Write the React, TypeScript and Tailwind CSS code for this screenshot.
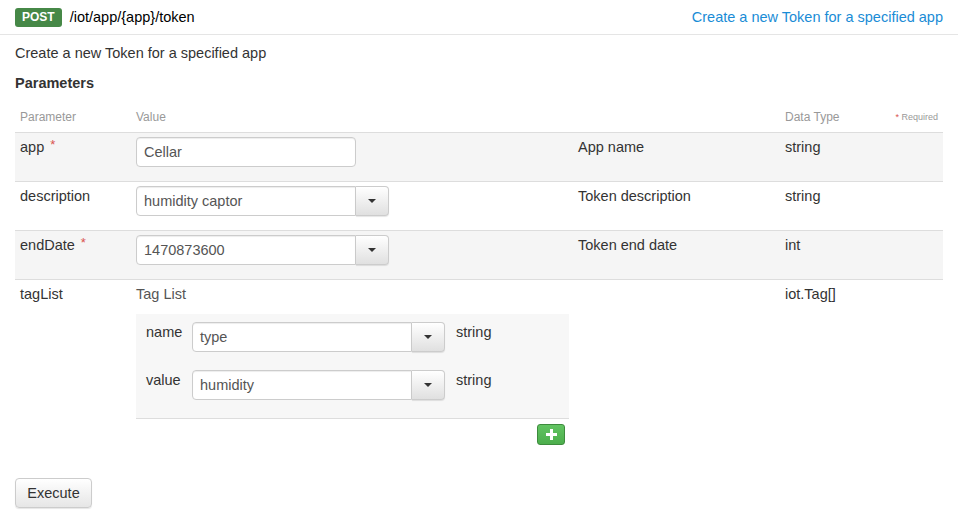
import React from "react";

const Caret = () => <span className="inline-block w-0 h-0 border-x-[4px] border-x-transparent border-t-[4px] border-t-[#333]" />;

const ComboInput = ({ value, width }: { value: string; width: string }) => (
    <div className={`flex h-[30px] ${width}`}>
        <div className="flex-1 flex items-center pl-[7px] border border-[#ccc] rounded-l-[4px] bg-white shadow-[inset_0_1px_1px_rgba(0,0,0,0.075)] text-[#555]">
            {value}
        </div>
        <button className="w-[33px] flex items-center justify-center border border-l-0 border-[#ccc] rounded-r-[4px] bg-gradient-to-b from-white to-[#e0e0e0] shadow-[0_1px_1px_rgba(0,0,0,0.1)]">
            <Caret />
        </button>
    </div>
);

const Star = () => <span className="text-[#d9534f] ml-[6px] text-[13px] relative top-[-3px]">*</span>;

const rows = [
    { name: "app", required: true, value: "Cellar", combo: false, desc: "App name", type: "string", striped: true },
    { name: "description", required: false, value: "humidity captor", combo: true, desc: "Token description", type: "string", striped: false },
    { name: "endDate", required: true, value: "1470873600", combo: true, desc: "Token end date", type: "int", striped: true },
];

const cols = "grid grid-cols-[116px_442px_207px_163px]";

export default function App() {
    return (
        <div className="w-[958px] h-[526px] bg-white text-[14.5px] leading-[20px] text-[#333] font-['Liberation_Sans',Arial,sans-serif]">
            <div className="h-[35px] flex items-center justify-between pl-[15px] pr-[15px] border-b border-[#e5e5e5]">
                <div className="flex items-center gap-[8px]">
                    <span className="h-[19px] px-[7px] flex items-center rounded-[3px] bg-[#468847] text-white text-[12px] font-bold leading-none">POST</span>
                    <span className="text-[#000]">/iot/app/&#123;app&#125;/token</span>
                </div>
                <span className="text-[#1a8cd6]">Create a new Token for a specified app</span>
            </div>

            <div className="px-[15px] pt-[8px]">
                <p>Create a new Token for a specified app</p>
                <h4 className="mt-[10px] font-bold">Parameters</h4>

                <div className="mt-[14px] w-[928px]">
                    <div className={`${cols} text-[12px] text-[#999] pb-[5px]`}>
                        <div className="px-[5px]">Parameter</div>
                        <div className="px-[5px]">Value</div>
                        <div />
                        <div className="px-[5px] flex justify-between">
                            <span>Data Type</span>
                            <span className="text-[9px]"><span className="text-[#d9534f]">*</span> Required</span>
                        </div>
                    </div>

                    {rows.map((r) => (
                        <div key={r.name} className={`${cols} border-t border-[#ddd] h-[49px] pt-[4px] ${r.striped ? "bg-[#f5f5f5]" : "bg-white"}`}>
                            <div className="px-[5px]">
                                {r.name}
                                {r.required && <Star />}
                            </div>
                            <div className="px-[5px]">
                                {r.combo ? (
                                    <ComboInput value={r.value} width="w-[253px]" />
                                ) : (
                                    <div className="w-[220px] h-[30px] flex items-center pl-[7px] border border-[#ccc] rounded-[4px] bg-white shadow-[inset_0_1px_1px_rgba(0,0,0,0.075)] text-[#555]">
                                        {r.value}
                                    </div>
                                )}
                            </div>
                            <div className="px-[5px]">{r.desc}</div>
                            <div className="px-[5px]">{r.type}</div>
                        </div>
                    ))}

                    <div className={`${cols} border-t border-[#ddd] pt-[4px]`}>
                        <div className="px-[5px]">tagList</div>
                        <div className="px-[5px]">
                            <div className="text-[#555]">Tag List</div>
                            <div className="mt-[10px] w-[433px] bg-[#f7f7f7] border-b border-[#ddd] pt-[8px] pb-[18px] pl-[10px] flex flex-col gap-[18px]">
                                {[
                                    ["name", "type"],
                                    ["value", "humidity"],
                                ].map(([label, val]) => (
                                    <div key={label} className="flex items-start">
                                        <div className="w-[46px]">{label}</div>
                                        <ComboInput value={val} width="w-[253px]" />
                                        <div className="ml-[11px]">string</div>
                                    </div>
                                ))}
                            </div>
                            <div className="w-[433px] flex justify-end pr-[4px] mt-[5px]">
                                <button className="w-[28px] h-[21px] flex items-center justify-center rounded-[3px] border border-[#3d8b3d] bg-gradient-to-b from-[#62c462] to-[#4cae4c]">
                                    <svg width="11" height="11" viewBox="0 0 11 11">
                                        <path d="M4 0h3v4h4v3H7v4H4V7H0V4h4z" fill="#fff" />
                                    </svg>
                                </button>
                            </div>
                        </div>
                        <div />
                        <div className="px-[5px]">iot.Tag[]</div>
                    </div>
                </div>

                <button className="mt-[33px] w-[77px] h-[30px] border border-[#ccc] rounded-[4px] bg-gradient-to-b from-white to-[#e6e6e6] shadow-[0_1px_1px_rgba(0,0,0,0.1)] text-[#333]">
                    Execute
                </button>
            </div>
        </div>
    );
}
